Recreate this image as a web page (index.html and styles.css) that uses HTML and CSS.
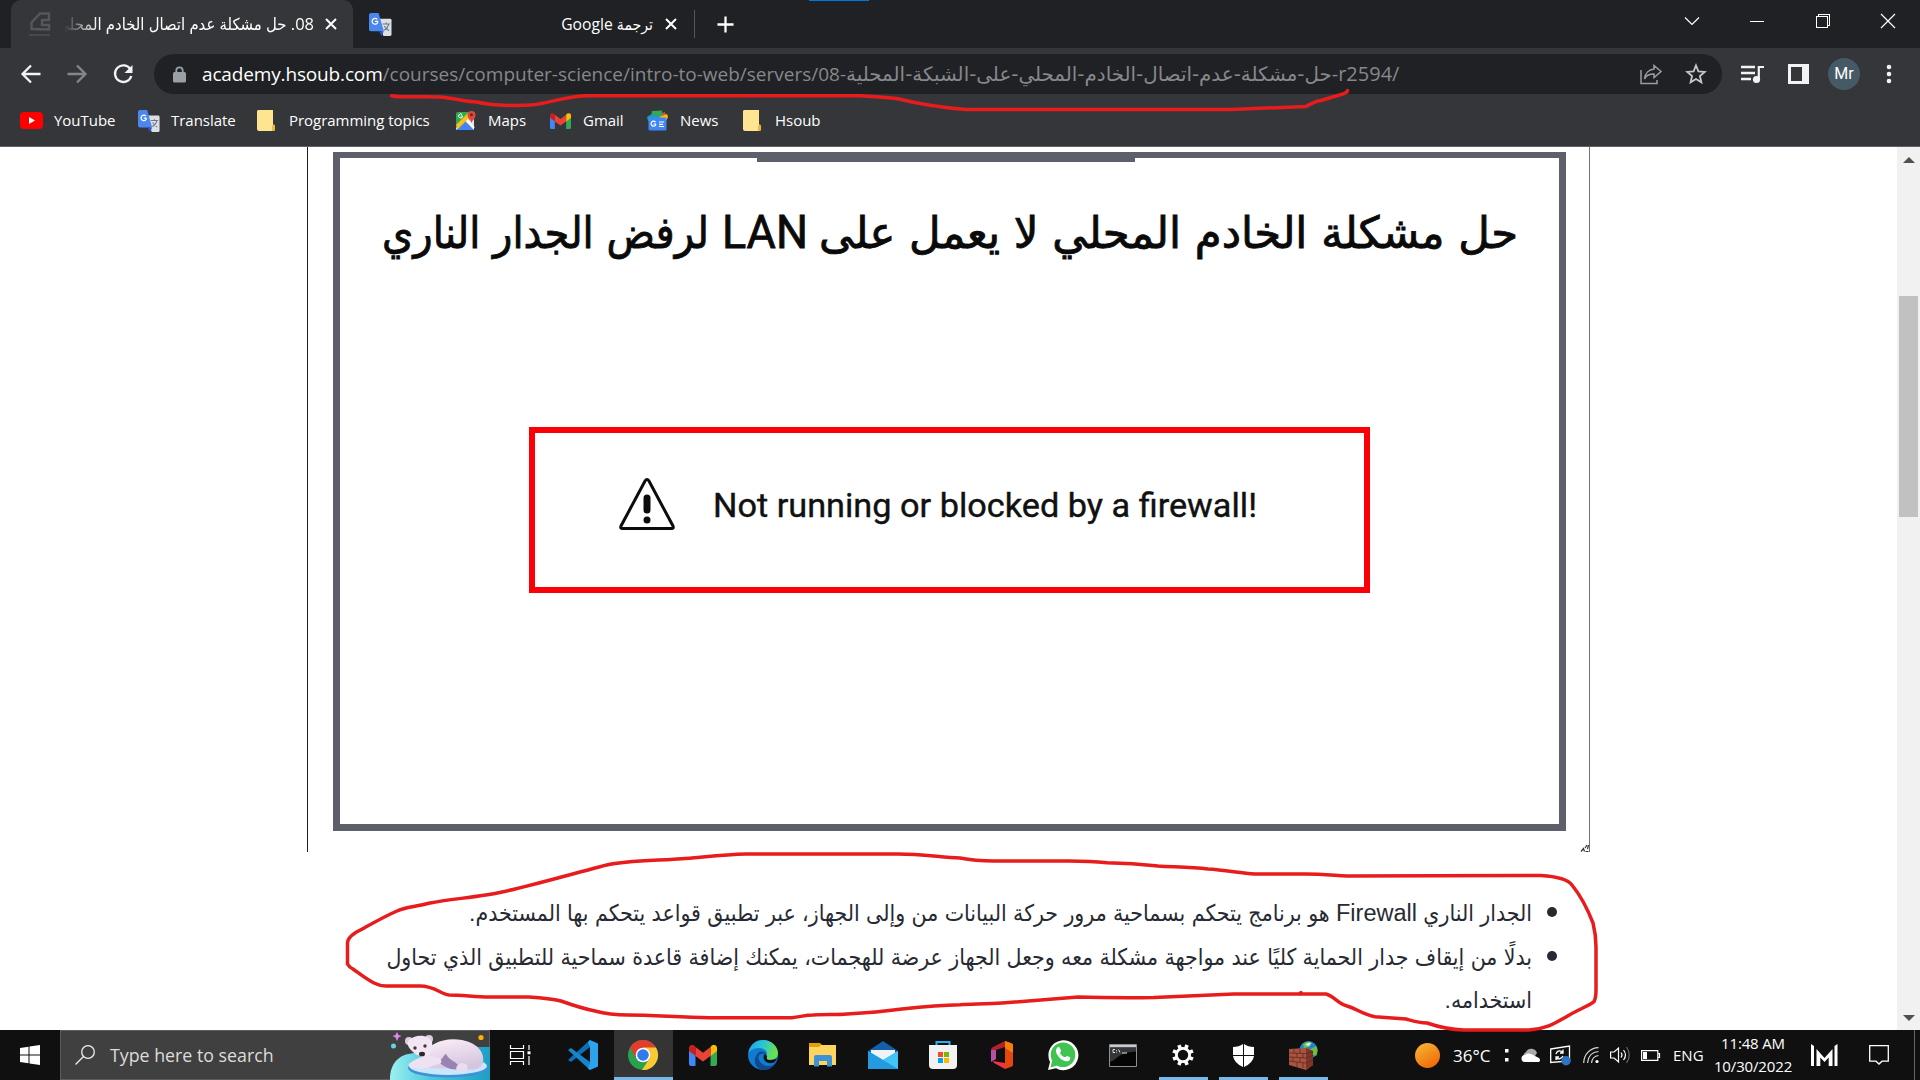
FILE: index.html
```html
<!DOCTYPE html>
<html lang="en">
<head>
<meta charset="utf-8">
<title>08. حل مشكلة عدم اتصال الخادم المحلي</title>
<link rel="stylesheet" href="styles.css">
</head>
<body>
<svg class="defs" width="0" height="0" aria-hidden="true">
  <symbol id="translate" viewBox="0 0 24 24">
    <path d="M9 6h13a1.500 1.500 0 0 1 1.500 1.500v15A1.500 1.500 0 0 1 22 24h-7z" fill="#dcdfe3"/>
    <path d="M2 0h8l5.500 19H2a2 2 0 0 1-2-2V2a2 2 0 0 1 2-2z" fill="#4a87ee"/>
    <path d="M10.500 19h5l-2.600 5z" fill="#2a56c6"/>
    <path d="M9.300 8.800H6.300M8.600 6.700a3 3 0 1 0 .7 2.200" fill="none" stroke="#fff" stroke-width="1.300"/>
    <path d="M14 11.500h8M18 10v1.500M20.500 11.500c-.6 3-3 5.500-5 6.500M16 13.500c1 2 3 4 5 5" fill="none" stroke="#6b7a86" stroke-width="1.200"/>
  </symbol>
  <symbol id="folder" viewBox="0 0 18 21">
    <path d="M1 0h15v15l2 1v4l-2 1H2a2 2 0 0 1-2-2V1z" fill="#ffe591"/>
    <path d="M15 21v-5l2-2 1 2v4l-1 1z" fill="#e9b93a"/>
  </symbol>
  <symbol id="gmail" viewBox="0 0 28 21">
    <path d="M0 4v15a2 2 0 0 0 2 2h4.500V9z" fill="#4285f4"/>
    <path d="M28 4v15a2 2 0 0 1-2 2h-4.500V9z" fill="#34a853"/>
    <path d="M21.500 2v9L28 6V3c0-3-3.200-4-5.200-2.400z" fill="#fbbc04"/>
    <path d="M0 3v3l6.500 5V2L5.200.6C3 -1 0 .2 0 3z" fill="#c5221f"/>
    <path d="M6.500 2v9L14 16.500l7.500-5.500V2L14 7.700z" fill="#ea4335"/>
  </symbol>
</svg>

<header class="browser">
  <div class="tabstrip">
    <div class="tab tab-active">
      <svg class="tab-icon" viewBox="0 0 22 26"><path d="M2.500 18v-6.500L11 2.500h9V9h-7v5h7v4.500z" fill="none" stroke="#55565a" stroke-width="2.500"/><path d="M0 23h21v2H0z" fill="#47484b"/></svg>
      <div class="tab-title faded" dir="rtl"><span class="t1">08. حل مشكلة عدم اتصال الخادم المحلي</span></div>
      <svg class="tab-close" viewBox="0 0 12 12"><path d="M1 1l10 10M11 1L1 11"/></svg>
    </div>
    <div class="tab tab-idle">
      <svg class="tab-icon tr" viewBox="0 0 24 24"><use href="#translate"/></svg>
      <div class="tab-title" dir="rtl"><span class="t2">ترجمة Google</span></div>
      <svg class="tab-close" viewBox="0 0 12 12"><path d="M1 1l10 10M11 1L1 11"/></svg>
    </div>
    <i class="tab-sep"></i>
    <svg class="plus" viewBox="0 0 18 18"><path d="M9 .5v17M.5 9h17"/></svg>
    <i class="snap-line"></i>
    <div class="window-buttons">
      <svg viewBox="0 0 14 14"><path d="M0 3.500l7 7 7-7"/></svg>
      <svg viewBox="0 0 14 14"><path d="M0 7.500h14" shape-rendering="crispEdges"/></svg>
      <svg viewBox="0 0 14 14"><path d="M.5 2.500h11v11H.5zM2.500 2.500v-2h11v11h-2" shape-rendering="crispEdges"/></svg>
      <svg viewBox="0 0 14 14"><path d="M0 0l14 14M14 0L0 14"/></svg>
    </div>
  </div>

  <div class="toolbar">
    <svg class="nav" viewBox="0 0 20 20"><path d="M19.500 10H2M10 1.500L1.500 10l8.500 8.500"/></svg>
    <svg class="nav dim" viewBox="0 0 20 20"><path d="M.5 10H18M10 1.500l8.500 8.500-8.500 8.500"/></svg>
    <svg class="nav" viewBox="0 0 20 20"><path d="M17.500 5.500A8.300 8.300 0 1 0 18.300 12"/><path d="M19.500 1v8h-8z" class="solid"/></svg>
    <div class="omnibox">
      <svg class="lock" viewBox="0 0 13 17"><path d="M3.300 7V4.500a3.200 3.200 0 0 1 6.400 0V7" fill="none" stroke="#9aa0a6" stroke-width="1.800"/><rect y="6" width="13" height="10.500" rx="1.500" fill="#9aa0a6"/></svg>
      <div class="url"><span class="host">academy.hsoub.com</span><span class="path">/courses/computer-science/intro-to-web/servers/08-</span><bdi class="slug" dir="rtl">حل-مشكلة-عدم-اتصال-الخادم-المحلي-على-الشبكة-المحلية</bdi><span class="tail">-r2594/</span></div>
      <svg class="share" viewBox="0 0 22 22"><path d="M1 7v13.500h16V17" /><path d="M14 2.500l7 6-7 6V11C9 11 6 12.500 4.500 16 5 10 9 6.500 14 6z"/></svg>
      <svg class="star" viewBox="0 0 20 20"><path d="M10 1.500l2.400 5.900 6.300.5-4.800 4.100 1.500 6.300L10 15l-5.400 3.300L6.100 12 1.300 7.900l6.300-.5z"/></svg>
    </div>
    <svg class="playlist" viewBox="0 0 23 19"><path d="M0 2h14M0 8h14M0 14h10" stroke="#f1f3f4" stroke-width="2.400"/><path d="M17.800 1v13M17 2h6" stroke="#f1f3f4" stroke-width="2.200" fill="none"/><circle cx="15.500" cy="14.500" r="3.600" fill="#f1f3f4"/></svg>
    <i class="sidepanel"></i>
    <span class="avatar">Mr</span>
    <svg class="menu" viewBox="0 0 6 20"><circle cx="3" cy="3" r="2.300"/><circle cx="3" cy="10" r="2.300"/><circle cx="3" cy="17" r="2.300"/></svg>
  </div>

  <nav class="bookmarks">
    <a class="bm yt"><svg viewBox="0 0 23 17"><rect width="23" height="17" rx="4" fill="#f00"/><path d="M9 5l6 3.500L9 12z" fill="#fff"/></svg><span>YouTube</span></a>
    <a class="bm gt"><svg viewBox="0 0 24 24"><use href="#translate"/></svg><span>Translate</span></a>
    <a class="bm fo"><svg viewBox="0 0 18 21"><use href="#folder"/></svg><span>Programming topics</span></a>
    <a class="bm mp"><svg viewBox="0 0 20 21"><rect x="0" y="2" width="18" height="18" rx="2" fill="#34a853"/><path d="M0 18L15 3h3v17H0z" fill="#dfe3e6"/><path d="M0 20L9 11l9 9z" fill="#4285f4"/><path d="M0 15L12 3l3 3L2 19z" fill="#fbc116"/><path d="M11 10l7 8" stroke="#fff" stroke-width="2"/><path d="M15.500 13.500c0-3-4-4.500-4-8.500a4 4 0 0 1 8 0c0 4-4 5.500-4 8.500z" fill="#dd4b3e"/><circle cx="15.500" cy="4.800" r="1.500" fill="#7b2119"/><path d="M6.500 6H4.700M6 4.500a2 2 0 1 0 .6 1.600" stroke="#fff" fill="none"/></svg><span>Maps</span></a>
    <a class="bm gm"><svg viewBox="0 0 28 21"><use href="#gmail"/></svg><span>Gmail</span></a>
    <a class="bm nw"><svg viewBox="0 0 21 20"><path d="M3 6l15-5 2 8z" fill="#ea4335"/><path d="M5 0l10-.5 1 7H4z" fill="#34a853"/><path d="M0 6l5-3 11 3v4H1z" fill="#1aa0b5"/><path d="M12 6l8-3 1 3-2 4z" fill="#fbbc04"/><rect x="1.500" y="6.500" width="18" height="13" rx="1.500" fill="#4285f4"/><path d="M9 13H6.500M8.500 11a2.500 2.500 0 1 0 .5 2.400M12 11h5M12 13.300h4M12 15.500h5" stroke="#fff" stroke-width="1.200" fill="none"/></svg><span>News</span></a>
    <a class="bm hs"><svg viewBox="0 0 18 21"><use href="#folder"/></svg><span>Hsoub</span></a>
  </nav>
</header>

<main class="viewport">
  <div class="article">
    <figure class="slide-wrap">
      <div class="slide">
        <i class="slide-notch"></i>
        <svg class="slide-title" viewBox="0 0 1150 80">
          <text x="444" y="54" textLength="699" lengthAdjust="spacingAndGlyphs" direction="rtl" text-anchor="end">حل مشكلة الخادم المحلي لا يعمل على</text>
          <text class="latin" x="347" y="54" textLength="86" lengthAdjust="spacingAndGlyphs">LAN</text>
          <text x="7" y="54" textLength="327" lengthAdjust="spacingAndGlyphs" direction="rtl" text-anchor="end">لرفض الجدار الناري</text>
        </svg>
        <div class="warning">
          <svg class="warn-icon" viewBox="0 0 56 52"><path d="M28 1.500Q29 1.500 30 3L54 48Q55 50.500 52.500 50.500H3.500Q1 50.500 2 48L26 3Q27 1.500 28 1.500z" fill="none" stroke="#0c0c0c" stroke-width="3"/><path d="M28 20v12" stroke="#0c0c0c" stroke-width="7" stroke-linecap="round"/><circle cx="28" cy="42" r="3.500" fill="#0c0c0c"/></svg>
          <svg class="warn-text" viewBox="0 0 560 50"><text x="0" y="33" textLength="544" lengthAdjust="spacingAndGlyphs">Not running or blocked by a firewall!</text></svg>
        </div>
      </div>
      <svg class="crumb" viewBox="0 0 8 9"><path d="M0 8.500l2.500-3 1 3M4.500 8.500h3M4 5l2-3M6.500 6l1-4" fill="none" stroke="#333" stroke-width="1.200"/></svg>
    </figure>
    <ul class="notes" dir="rtl">
      <li><span class="l1">الجدار الناري <b>Firewall</b> هو برنامج يتحكم بسماحية مرور حركة البيانات من وإلى الجهاز، عبر تطبيق قواعد يتحكم بها المستخدم.</span></li>
      <li><span class="l2">بدلًا من إيقاف جدار الحماية كليًا عند مواجهة مشكلة معه وجعل الجهاز عرضة للهجمات، يمكنك إضافة قاعدة سماحية للتطبيق الذي تحاول</span><br><span class="l3">استخدامه.</span></li>
    </ul>
  </div>
  <div class="scrollbar">
    <svg viewBox="0 0 12 6"><path d="M0 6l6-6 6 6z"/></svg>
    <i class="thumb"></i>
    <svg viewBox="0 0 12 6"><path d="M0 0l6 6 6-6z"/></svg>
  </div>
</main>

<footer class="taskbar">
  <div class="start"><svg viewBox="0 0 20 20"><path d="M0 3l8.500-1.200V9.500H0zM9.500 1.600L20 0v9.500H9.500zM0 10.500h8.500v7.700L0 17zM9.500 10.500H20V20L9.500 18.400z" fill="#fff"/></svg></div>
  <div class="search">
    <svg class="lens" viewBox="0 0 20 20"><circle cx="13" cy="7" r="6.300"/><path d="M8.500 11.500L.5 19.500"/></svg>
    <span class="search-text">Type here to search</span>
    <svg class="bear" viewBox="0 0 100 50">
      <defs><linearGradient id="ice" x2="1"><stop stop-color="#9df0f0"/><stop offset=".4" stop-color="#4cc9dc"/><stop offset="1" stop-color="#1b9fc4"/></linearGradient>
      <linearGradient id="fur" x2=".4" y2="1"><stop stop-color="#fff1f8"/><stop offset="1" stop-color="#d5c6e0"/></linearGradient></defs>
      <path d="M0 50C0 30 12 22 30 23L82 17h18v33z" fill="url(#ice)"/>
      <ellipse cx="58" cy="38" rx="40" ry="9.500" fill="#3f90d6"/>
      <ellipse cx="58" cy="36" rx="39" ry="9" fill="#c9e6fa"/>
      <path d="M30 29C38 12 56 7 72 10c16 3 23 13 21 23-2 6-10 8-17 6L40 38z" fill="url(#fur)"/>
      <path d="M48 31c5-1 5-6 8-7 3 7 12 7 14 15-8 2-17-2-22-8z" fill="#9a83ae"/>
      <path d="M20 33c9-7 20-9 29-5 5 4 2 6-4 7-7 3-15 5-23 3-4-1-4-4-2-5z" fill="#eee1f2"/>
      <path d="M66 39c1-7 8-8 12-3l-2 5c-4 2-8 1-10-2z" fill="#eadcf0"/>
      <circle cx="19" cy="11" r="4" fill="#dccbdf"/><circle cx="39" cy="9" r="4" fill="#dccbdf"/>
      <path d="M18 11C25 4 38 4 42 12c1 8-1 13-6 14-7 1-10-1-15-6-3-3-4-6-3-9z" fill="#f2e6f4"/>
      <circle cx="25" cy="18" r="1.700" fill="#493436"/><circle cx="35" cy="16" r="1.700" fill="#493436"/><ellipse cx="32" cy="24" rx="3" ry="2.300" fill="#332428"/>
      <path d="M7 2l1.500 3 3 1-3 1.500L7 11 5.500 7.500 2.500 6l3-1z" fill="#e583f5"/><circle cx="3.500" cy="16" r="2.500" fill="#66d2e6"/><circle cx="91" cy="7.500" r="2.600" fill="#ffb000"/>
    </svg>
  </div>
  <div class="taskview"><svg viewBox="0 0 20 20"><path d="M.5 0v3.500h13V0M.5 20v-3.500h13V20M.5 6.500h13v7H.5zM19 0v5M19 11v9" fill="none" stroke="#fff" stroke-width="1.200"/><rect x="17.500" y="6.300" width="3" height="3" fill="#fff"/></svg></div>
  <div class="apps">
    <div class="app"><svg width="30" height="30" viewBox="0 0 30 30"><path d="M0 20l3 2L22 7V0z" fill="#0b70b5"/><path d="M0 10l3-2 19 14v8z" fill="#1785cb"/><path d="M22 0l8 3.500v23L22 30l-2-1.500 2-5.500V7l-2-5z" fill="#2aa4ee"/></svg></div>
    <div class="app current"><svg width="30" height="30" viewBox="0 0 30 30"><circle cx="15" cy="15" r="15" fill="#2aa14c"/><path d="M2 7.500A15 15 0 0 1 28 7.500L15 8 8.500 18.700z" fill="#e33b2e"/><path d="M28 7.500A15 15 0 0 1 14 30l7.500-11.500L15 8V7.500z" fill="#fcc934"/><circle cx="15" cy="15" r="7.300" fill="#fff"/><circle cx="15" cy="15" r="5.800" fill="#307ced"/></svg></div>
    <div class="app"><svg width="28" height="21" viewBox="0 0 28 21"><use href="#gmail"/></svg></div>
    <div class="app"><svg width="30" height="30" viewBox="0 0 30 30"><defs><linearGradient id="eg" x2="1" y2=".3"><stop stop-color="#1aa0e8"/><stop offset=".5" stop-color="#29c5d8"/><stop offset="1" stop-color="#6be04d"/></linearGradient></defs><circle cx="15" cy="15" r="15" fill="#0f7bd2"/><path d="M.5 13C2 4 8 0 15 0c9 0 15 7 15 13 0 5-4 7-8 7-3 0-5-1-4-3 3-6-2-9-7-9-6 0-9 3-10.500 5z" fill="url(#eg)"/><path d="M10.500 17c0 5 5 9 10 9 3 0 5-1 7-3-4 7-11 8-15 6.500-8-4-7-14-1-17.500 2-1 6 0 7 2-5-1-8 0-8 3z" fill="#114a8b"/><path d="M19 17c-1 2 0 3 3 3 3 0 6-1 7-2-1 3-3 5-5 5-5 1-10-3-8-8 1-2 3 0 3 2z" fill="#101010"/></svg></div>
    <div class="app"><svg width="28" height="24" viewBox="0 0 28 24"><path d="M0 0h11l3 3v4H0z" fill="#dfa00a"/><path d="M0 4h10l2-2h15v20H0z" fill="#ffd45e"/><path d="M5 23.500V14q0-2 2-2h14q2 0 2 2v9.500h-5V18h-8v5.500z" fill="#3d92d6"/></svg></div>
    <div class="app"><svg width="30" height="28" viewBox="0 0 30 28"><path d="M0 10L15 0l15 10v4H0z" fill="#145fa8"/><path d="M3 9h24v12H3z" fill="#eef3f8"/><path d="M0 10l15 9 15-9v18H0z" fill="#2aa9e8"/><path d="M0 28l22-13L30 10v18z" fill="#41c5f5"/><path d="M0 10l30 18H0z" fill="#249be0"/></svg></div>
    <div class="app"><svg width="30" height="30" viewBox="0 0 30 30"><path d="M8.500 7V2h13v5" fill="none" stroke="#23b1ee" stroke-width="2"/><path d="M1 5h28v20a4 4 0 0 1-4 4H5a4 4 0 0 1-4-4z" fill="#f1f1f1"/><path d="M10 12h5v5h-5z" fill="#ef4e24"/><path d="M16 12h5v5h-5z" fill="#7db800"/><path d="M10 18h5v5h-5z" fill="#00a3ec"/><path d="M16 18h5v5h-5z" fill="#ffb800"/></svg></div>
    <div class="app office"><svg width="22" height="28" viewBox="0 0 22 28"><path d="M14 0L2 6Q0 7 0 9v11l5-2V9l9-3z" fill="#b5202f"/><path d="M0 9v12l5-3V9z" fill="#b94fa0"/><path d="M14 0l7 2.500Q22 3 22 4.500v19q0 1.500-1 2L14 28z" fill="#e3470d"/><path d="M14 0l7 2.500Q22 3 22 4.500V12l-8-5z" fill="#f3800b"/><path d="M2 20l12 2v6L3 22z" fill="#f0324b"/></svg></div>
    <div class="app"><svg width="30" height="30" viewBox="0 0 30 30"><path d="M0 30l2-8A15 15 0 1 1 8 28.300z" fill="#fff"/><circle cx="15" cy="14.800" r="12.300" fill="#3fc351"/><path d="M2.500 27.500l1.700-7 5 5z" fill="#3fc351"/><path d="M9 8c1-1.500 2.500-1 3 .2l1 2.500c.2 1-1 1.500-1 2.300 1 2 3 3.700 5 4.300.8 0 1.300-1.600 2.200-1.400l2.700 1.300c.8.500.3 2.400-.6 3.200-2 1.600-4.800.7-7.300-.7-2.500-1.600-4.500-4-5.600-6.500C7.800 11 8 9 9 8z" fill="#fff"/></svg></div>
    <div class="app"><svg width="28" height="23" viewBox="0 0 28 23"><path d="M.5.5h27v22H.5z" fill="#050505" stroke="#8b9096"/><path d="M1 1h26v2.500H1z" fill="#c6cbd0"/><path d="M1 3.500h26v4Q12 8 5 16l-4 2z" fill="#343638"/><path d="M4 5.500v3M4 5.500h2M4 8.500h2M7.500 6v.8M7.500 7.800v.8M9.500 5.500l1.500 3M13 9h5" stroke="#ddd" fill="none"/></svg></div>
    <div class="app open gear"><svg width="22" height="22" viewBox="-11 -11 22 22"><circle r="6.600" fill="none" stroke="#fff" stroke-width="2.800"/><path d="M0-10.800v4M0 10.800v-4M-10.800 0h4M10.800 0h-4M-7.600-7.600l2.800 2.800M7.600-7.600L4.800-4.800M-7.600 7.600l2.800-2.800M7.600 7.600L4.800 4.800" transform="rotate(22.500)" stroke="#fff" stroke-width="3.600"/></svg></div>
    <div class="app open"><svg width="21" height="23" viewBox="0 0 21 23"><path d="M0 3Q6 3 10 0v11H0zM11 0q4 3 10 3v8H11zM0 12h10v11Q1 19 0 12zM11 12h10q-1 7-10 11z" fill="#fff"/></svg></div>
    <div class="app open"><svg width="29" height="29" viewBox="0 0 29 29"><circle cx="19.500" cy="9" r="9" fill="#2a7fd2"/><path d="M14 3q5-4 9-1l-3 4-5 1zM20 9l7-4q3 5 0 10l-5-2z" fill="#6abf3b"/><path d="M16 4q3-3 6-2l-2 3z" fill="#d8efff"/><path d="M0 8l17-1 7 3v14l-7 5L0 24z" fill="#a9543e"/><path d="M17 7v22l7-5V10z" fill="#7e3527"/><path d="M0 12l17 .5 7-2M0 16l17 1 7-2.500M0 20l17 2 7-3.500M5 8v4M11 8v4M8 12v4M14 13v4M4 16v4M11 17v4M8 21v5M14 22v5" stroke="#5d2b20" stroke-width=".8" fill="none"/></svg></div>
  </div>
  <div class="tray">
    <i class="sun"></i><span class="temp">36°C</span>
    <svg class="dots" width="4" height="13" viewBox="0 0 4 13"><path d="M0 0h3.500v3.500H0zM0 9h3.500v3.500H0z" fill="#fff"/></svg>
    <svg class="cloud" width="20" height="14" viewBox="0 0 20 14"><path d="M2 11a5 5 0 0 1 2-7 6 6 0 0 1 11 1l-4 6z" fill="#aaa"/><path d="M3 14a3.500 3.500 0 0 1 0-7 6 6 0 0 1 6-1l8 4a2.500 2.500 0 0 1 0 4z" fill="#fff"/></svg>
    <svg class="upd" width="21" height="21" viewBox="0 0 21 21"><path d="M.7 4L19.500 1v15L.7 17.500z" fill="none" stroke="#fff" stroke-width="1.300"/><path d="M6 9c1-4 6-4 7-1M13 4.500V8h-3M13 11c-1 3-6 4-7 1M6 15v-3h3" fill="none" stroke="#fff" stroke-width="1.300"/><circle cx="16" cy="15.800" r="4.700" fill="#2e75c0"/></svg>
    <svg class="wifi" width="16" height="16" viewBox="0 0 16 16"><path d="M.7 16C1 7 7 1 15.500.7M4.500 16C5 9.500 9 5 15.500 4.500M8.500 16C9 11.500 11.500 9 15.500 8.500" fill="none" stroke="#d5d5d5" stroke-width="1.200"/><circle cx="14" cy="14.500" r="1.600" fill="#fff"/></svg>
    <svg class="vol" width="20" height="18" viewBox="0 0 20 18"><path d="M.6 6h3.500L8.500 2v14L4.100 12H.6z" fill="none" stroke="#fff" stroke-width="1.200"/><path d="M11 6.500q2 2.500 0 5M13.500 4q4 5 0 10" fill="none" stroke="#fff" stroke-width="1.200"/><path d="M16.500 1q5.500 8 0 16" fill="none" stroke="#666" stroke-width="1.200"/></svg>
    <svg class="bat" width="19" height="11" viewBox="0 0 19 11"><path d="M.6.6h16.200v9.800H.6zM17 3.500h1.500v4H17" fill="none" stroke="#fff" stroke-width="1.200"/><path d="M2 2h4v7H2z" fill="#fff"/></svg>
    <span class="lang">ENG</span>
    <div class="clock"><span>11:48 AM</span><span class="date">10/30/2022</span></div>
    <svg class="mlogo" width="27" height="23" viewBox="0 0 27 23"><path d="M0 0l3 2v20H0zM23.500 2l3-2v22h-3zM5.500 5l8 9 8-9v17h-3.800v-8.500L13.500 18l-4.200-4.500V22H5.500z" fill="#fff"/></svg>
    <svg class="notif" width="20" height="20" viewBox="0 0 20 20"><path d="M.7.700h18.600v15.500H13L10 19l-3-2.800H.7z" fill="none" stroke="#fff" stroke-width="1.300"/></svg>
    <i class="peek"></i>
  </div>
</footer>

<svg class="pen" viewBox="0 0 1920 1080">
  <path d="M391.600 95.700C400 98 420 96 438.600 97 456 98 464 102 477 102 490 105.500 516 106 531 105 548 104 560 97 586 95.700H861C875 97 885 97 899 99 915 103 935 107 966 109.500H1231L1306 106.500C1311 104 1315 101 1320 100.700L1343 94Q1348 92 1347.500 90.500"/>
  <path d="M960 858C940 857 920 854 898 854H746C715 855 690 859 658 860 640 861 617 861 599 867 565 876 530 886 502 892 480 897 450 899 430 903 415 907 405 907 397 911 383 917 368 926 355 933Q347.500 938 347.500 943V964Q349 967 353 969C360 974 366 979 374 983Q380 986 386 986H420C435 986 440 994 449 995 462 995 476 997 489 997H529C545 998 553 999 561 1001 575 1006 585 1009 595 1011 606 1014 618 1015 628 1015 655 1015 685 1018 712 1017.700H792C800 1017 805 1015 813 1015 825 1014 836 1015 847 1014 865 1013 887 1011 902 1009 920 1007 940 1005 960 1004.700 975 1004 989 1004 1002 1003L1078 997Q1115 998 1154 997.500L1234 994H1326C1334 996 1338 1004 1347 1006 1357 1009 1364 1015 1375 1016.700L1406 1019C1413 1021 1419 1023 1427 1023Q1446 1029.500 1464 1030H1529C1547 1029 1557 1022 1566 1017 1577 1010 1589 1006 1594 1001.700Q1596 998 1596 990V947Q1596 935 1593 923C1588 910 1580 895 1572 885Q1566 877 1541 875.500L1347 876C1330 875 1320 874 1305 874H1255C1240 873 1225 870 1208 869 1190 867 1173 867 1158 866 1140 864 1125 863 1107 862.700Q1090 861 1069 861H994Q975 861 960 858z"/>
  <path d="M1300 993.500l1-1"/>
</svg>
</body>
</html>
```
FILE: styles.css
```css
* { box-sizing: border-box; }
body { margin: 0; width: 1920px; height: 1080px; overflow: hidden; position: relative; display: flex; flex-direction: column; background: #fff; font-family: "Open Sans", "Noto Sans", "DejaVu Sans Condensed", "DejaVu Sans", sans-serif; }
svg { display: block; flex: none; overflow: visible; }
.defs { position: absolute; }
i { display: block; flex: none; }

.browser { height: 147px; background: #35363a; border-bottom: 1px solid #625f66; flex: none; }
.tabstrip { height: 48px; background: #202124; display: flex; align-items: center; position: relative; padding-left: 11px; }
.tab { display: flex; align-items: center; height: 48px; color: #fff; font-size: 15.500px; white-space: nowrap; }
.tab-active { width: 342px; background: #35363a; border-radius: 10px 10px 0 0; padding-left: 18px; }
.tab-idle { width: 341px; padding-left: 16px; }
.tab-icon { width: 22px; height: 26px; }
.tab-icon.tr { width: 23px; height: 23px; }
.tab-title { flex: 1; overflow: hidden; height: 30px; line-height: 30px; margin-left: 13px; }
.t1 { font-size: 16.500px; }
.t2 { font-size: 15.700px; }
.faded { -webkit-mask-image: linear-gradient(to right, transparent, #000 34px); mask-image: linear-gradient(to right, transparent, #000 34px); }
.tab-close { width: 12px; height: 12px; margin: 0 16px 0 11px; fill: none; stroke: #fff; stroke-width: 2; }
.tab-idle .tab-close { margin: 0 17px 0 12px; }
.tab-sep { width: 1px; height: 28px; background: #55565a; }
.plus { width: 17px; height: 17px; margin-left: 22px; stroke: #fff; stroke-width: 2.400; fill: none; }
.snap-line { position: absolute; left: 809px; top: 0; width: 60px; height: 1px; background: #0078d7; }
.window-buttons { margin-left: auto; margin-right: 25px; margin-bottom: 6px; display: flex; gap: 51.500px; }
.window-buttons svg { width: 14px; height: 14px; stroke: #fff; fill: none; stroke-width: 1.200; }

.toolbar { height: 52px; display: flex; align-items: center; padding-left: 21px; }
.nav { width: 20px; height: 20px; margin-right: 26px; fill: none; stroke: #f1f3f4; stroke-width: 2.300; }
.nav.dim { stroke: #85868a; }
.nav .solid { fill: #f1f3f4; stroke: none; }
.omnibox { width: 1568px; height: 40px; margin-left: -5px; background: #202124; border-radius: 20px; display: flex; align-items: center; padding: 0 16px 0 19px; }
.lock { width: 13px; height: 17px; }
.url { width: 1438px; margin-left: 16px; color: #85888c; font-size: 19px; white-space: nowrap; display: flex; align-items: baseline; line-height: 38px; }
.host { color: #fff; letter-spacing: -.15px; }
.slug { font-family: "DejaVu Sans", sans-serif; font-size: 19.850px; }
.tail { font-size: 20px; }
.share { width: 22px; height: 22px; fill: none; stroke: #9c9da0; stroke-width: 1.500; }
.star { width: 20px; height: 20px; margin-left: 24px; fill: none; stroke: #c6c7c9; stroke-width: 1.800; }
.playlist { width: 23px; height: 19px; margin-left: 19px; }
.sidepanel { width: 21px; height: 20px; margin-left: 24px; border: 3px solid #f1f3f4; border-right-width: 7px; }
.avatar { width: 32px; height: 32px; border-radius: 50%; margin-left: 19px; background: #455a64; color: #fff; font: 16px/32px Roboto, sans-serif; text-align: center; }
.menu { width: 6px; height: 20px; margin-left: 26px; fill: #f1f3f4; }

.bookmarks { height: 41px; display: flex; align-items: center; padding-left: 20px; color: #fff; font-size: 15px; white-space: nowrap; }
.bm { display: flex; align-items: center; height: 41px; flex: none; }
.bm span { line-height: 24px; margin-bottom: 1px; letter-spacing: -.03px; }
.yt { width: 118px; } .yt svg { width: 23px; height: 17px; margin-right: 11px; }
.gt { width: 119px; } .gt svg { width: 22px; height: 22px; margin-right: 11px; }
.fo { width: 199px; } .fo svg, .hs svg { width: 18px; height: 21px; margin-right: 14px; }
.mp { width: 94px; } .mp svg { width: 20px; height: 21px; margin-right: 12px; }
.gm { width: 97px; } .gm svg { width: 21px; height: 16px; margin-right: 12px; }
.nw { width: 96px; } .nw svg { width: 21px; height: 20px; margin-right: 12px; }

.viewport { height: 883px; flex: none; display: flex; justify-content: space-between; overflow: hidden; }
.article { margin-left: 307px; width: 1283px; }
.slide-wrap { margin: 0; height: 705px; border-left: 1px solid #1e1e22; border-right: 1px solid #707078; padding: 5px 0 0 25px; position: relative; }
.crumb { position: absolute; right: 0; bottom: 0; width: 8px; height: 9px; }
.slide { width: 1233px; height: 679px; border: 7px solid #5d5f6b; border-top-width: 6px; display: flex; flex-direction: column; align-items: center; }
.slide-notch { width: 378px; height: 4px; background: #5d5f6b; margin-left: -7px; }
.slide-title { width: 1150px; height: 80px; margin-top: 32px; }
.slide-title text { font: 44px "DejaVu Sans Condensed", "DejaVu Sans", sans-serif; fill: #0a0a0a; stroke: #0a0a0a; stroke-width: .8; }
.slide-title .latin { font: 46px Roboto, sans-serif; }
.warning { width: 841px; height: 166px; margin-top: 153px; border: 6px solid #fb0007; display: flex; padding: 45px 0 0 84px; }
.warn-icon { width: 56px; height: 52px; }
.warn-text { width: 560px; height: 50px; margin-left: 38px; margin-top: 6px; }
.warn-text text { font: 33px Roboto, sans-serif; fill: #111; stroke: #111; stroke-width: .4; }

.notes { margin: 40px 58px 0 0; padding: 0; list-style: none; color: #272a33; font-size: 22.900px; font-family: "Liberation Sans", "DejaVu Sans Condensed", "DejaVu Sans", sans-serif; white-space: nowrap; }
.notes li { line-height: 43.500px; position: relative; }
.notes li::before { content: ""; position: absolute; right: -25px; top: 15px; width: 10px; height: 10px; border-radius: 50%; background: #272a33; }
.notes b { font-weight: 400; font-size: 23.500px; }

.scrollbar { width: 23px; background: #f1f1f1; display: flex; flex-direction: column; align-items: center; padding: 10px 0 9px; }
.scrollbar svg { width: 12px; height: 6px; fill: #505050; }
.thumb { width: 19px; height: 221px; background: #c1c1c1; margin: 133px 0 auto; }

.taskbar { height: 50px; flex: none; background: #101010; display: flex; color: #fff; }
.start { width: 60px; display: flex; align-items: center; justify-content: center; }
.start svg { width: 20px; height: 20px; }
.search { width: 430px; background: #404040; border: 1px solid #5c5c5c; display: flex; align-items: center; padding-left: 14px; }
.lens { width: 20px; height: 20px; fill: none; stroke: #eee; stroke-width: 1.300; }
.search-text { margin-left: 15px; color: #dcdcdc; font-size: 17.800px; white-space: nowrap; width: 170px; }
.bear { width: 100px; height: 50px; margin-left: auto; margin-right: -1px; }
.taskview { width: 63px; display: flex; align-items: center; padding-left: 20px; }
.taskview svg { width: 20px; height: 20px; }
.apps { display: flex; }
.app { width: 60px; height: 50px; display: flex; align-items: center; justify-content: center; position: relative; }
.office svg { margin-right: 2px; }
.gear svg { margin-right: 1px; margin-bottom: 1px; }
.current { background: linear-gradient(#343434, #343434) center / 59px 50px no-repeat; }
.current::after, .open::after { content: ""; position: absolute; bottom: 0; left: 6px; width: 49px; height: 3px; background: #76b9ed; }
.current::after { left: 1px; width: 59px; }
.tray { flex: 1; display: flex; align-items: center; margin-left: 82px; font-size: 16px; white-space: nowrap; position: relative; }
.sun { width: 25px; height: 25px; border-radius: 50%; background: linear-gradient(150deg, #f4bd35, #f2700c 80%); }
.temp { width: 52px; margin-left: 13px; font-size: 17px; }
.dots { margin-right: 13px; }
.upd { margin-left: 8px; }
.wifi { margin-left: 12px; }
.vol { margin-left: 11px; }
.bat { margin-left: 11px; }
.lang { margin-left: 13px; width: 40px; font-size: 15px; }
.clock { width: 80px; display: flex; flex-direction: column; align-items: center; font-size: 15px; line-height: 23px; letter-spacing: -.15px; }
.mlogo { margin-left: 18px; }
.notif { margin-left: 31px; }
.peek { width: 1px; height: 50px; background: #666; margin-left: 25px; }

.pen { position: absolute; left: 0; top: 0; width: 1920px; height: 1080px; pointer-events: none; fill: none; stroke: #e81c1c; stroke-width: 3.500; stroke-linecap: round; stroke-linejoin: round; }
```
